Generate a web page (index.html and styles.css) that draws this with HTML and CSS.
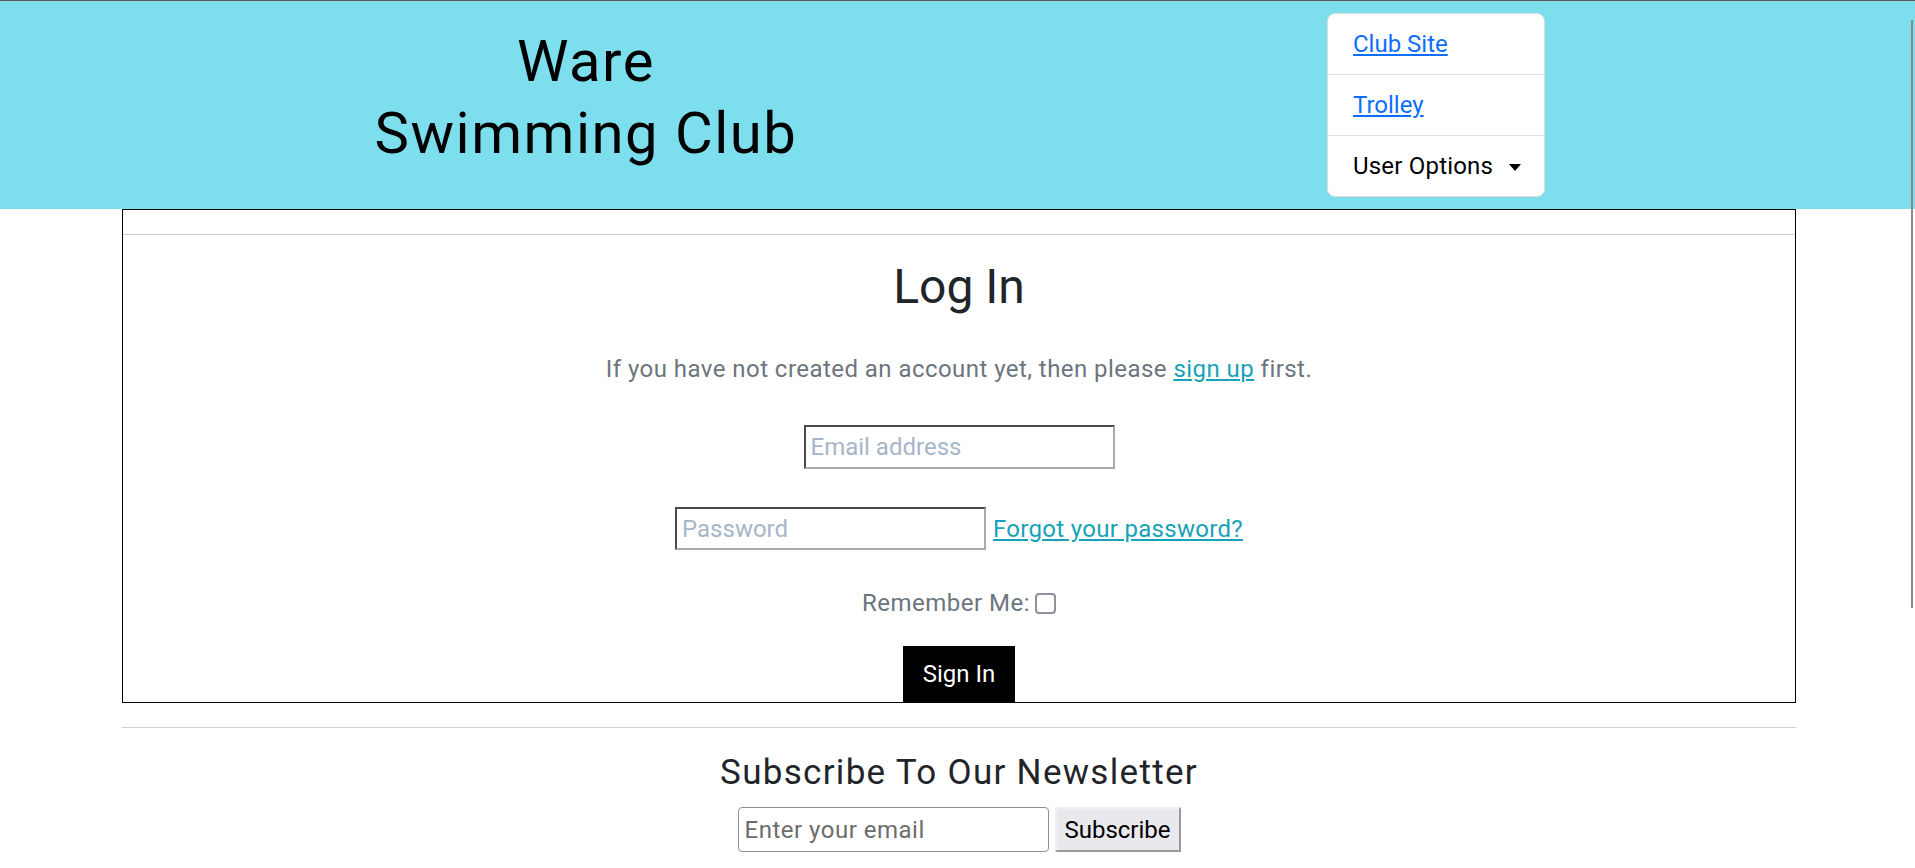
FILE: index.html
```html
<!DOCTYPE html>
<html lang="en">
<head>
<meta charset="utf-8">
<title>Ware Swimming Club - Log In</title>
<link rel="stylesheet" href="styles.css">
</head>
<body>
<header class="site-header">
  <div class="brand">
    <div class="brand-line">Ware</div>
    <div class="brand-line">Swimming Club</div>
  </div>
  <nav class="nav-card">
    <div class="nav-item"><a href="#" class="nav-link">Club Site</a></div>
    <div class="nav-item"><a href="#" class="nav-link">Trolley</a></div>
    <div class="nav-item"><span class="nav-toggle">User Options</span><span class="caret"></span></div>
  </nav>
</header>

<main class="login-card">
  <div class="card-top"></div>
  <div class="card-body">
    <h1 class="login-title">Log In</h1>
    <p class="login-intro">If you have not created an account yet, then please <a href="#" class="info-link">sign up</a> first.</p>
    <div class="form-row row-email">
      <input class="inset-input" type="email" placeholder="Email address">
    </div>
    <div class="form-row row-password">
      <input class="inset-input" type="password" placeholder="Password">
      <a href="#" class="info-link forgot">Forgot your password?</a>
    </div>
    <div class="form-row row-remember">
      <label class="remember-label">Remember Me:</label>
      <input class="remember-box" type="checkbox">
    </div>
    <div class="form-row row-submit">
      <button class="signin-btn" type="button">Sign In</button>
    </div>
  </div>
</main>

<section class="newsletter">
  <hr class="divider">
  <h2 class="news-title">Subscribe To Our Newsletter</h2>
  <div class="news-row">
    <input class="news-input" type="email" placeholder="Enter your email">
    <button class="news-btn" type="button">Subscribe</button>
  </div>
</section>

<div class="scroll-thumb"></div>
</body>
</html>
```

FILE: styles.css
```css
html, body {
  margin: 0;
  padding: 0;
  background: #ffffff;
  overflow: hidden;
}

body {
  font-family: Roboto, "Liberation Sans", sans-serif;
  color: #212529;
}

/* ---------- header ---------- */
.site-header {
  display: flex;
  align-items: flex-start;
  height: 208px;
  border-top: 1px solid #5d5d5d;
  background: #7ddfee;
}

.brand {
  width: 1172px;
  padding-top: 24px;
  text-align: center;
  font-size: 58px;
  line-height: 72px;
  letter-spacing: 1.5px;
  color: #000000;
}

.nav-card {
  margin-top: 12px;
  margin-left: 155px;
  width: 216px;
  background: #ffffff;
  border: 1px solid #dcdcdc;
  border-radius: 8px;
}

.nav-item {
  display: flex;
  align-items: center;
  height: 60px;
  padding: 0 20px 0 25px;
  font-size: 24px;
  line-height: 28px;
  white-space: nowrap;
}

.nav-item + .nav-item {
  border-top: 1px solid #dedede;
}

.nav-link {
  color: #0d6efd;
  text-decoration: underline;
}

.nav-toggle {
  color: #000000;
  letter-spacing: 0.2px;
}

.caret {
  flex: none;
  display: inline-block;
  margin-left: 16px;
  margin-top: 2px;
  border-top: 7px solid #000000;
  border-left: 6px solid transparent;
  border-right: 6px solid transparent;
}

/* ---------- login card ---------- */
.login-card {
  display: block;
  margin: 0 119px 0 122px;
  border: 1px solid #000000;
}

.card-top {
  height: 24px;
  border-bottom: 1px solid #cccccc;
}

.card-body {
  padding-top: 23px;
  text-align: center;
}

.login-title {
  margin: 0;
  font-size: 48px;
  line-height: 58px;
  font-weight: 400;
  color: #212529;
}

.login-intro {
  margin: 37px 0 0;
  font-size: 24px;
  line-height: 33px;
  letter-spacing: 0.45px;
  color: #6c757d;
}

.info-link {
  color: #17a2b8;
  text-decoration: underline;
}

.form-row {
  display: flex;
  justify-content: center;
  align-items: center;
}

.row-email {
  margin-top: 39px;
}

.row-password {
  margin-top: 38px;
  gap: 7px;
}

.inset-input {
  box-sizing: border-box;
  width: 311px;
  height: 44px;
  margin: 0;
  padding: 0 5px;
  border: 2px solid;
  border-color: #4a4a4a #aaaaaa #aaaaaa #4a4a4a;
  background: #ffffff;
  font-family: Roboto, "Liberation Sans", sans-serif;
  font-size: 24px;
  color: #212529;
  outline: none;
}

.row-password .inset-input {
  height: 43px;
}

.inset-input::placeholder {
  color: #a6b6c8;
}

.forgot {
  font-size: 24px;
  line-height: 30px;
  letter-spacing: 0.3px;
}

.row-remember {
  margin-top: 38px;
  height: 30px;
  gap: 5px;
}

.remember-label {
  font-size: 24px;
  line-height: 30px;
  letter-spacing: 0.5px;
  color: #6c757d;
}

.remember-box {
  appearance: none;
  -webkit-appearance: none;
  box-sizing: border-box;
  width: 21px;
  height: 21px;
  margin: 0;
  border: 2px solid #8f8f9d;
  border-radius: 4px;
  background: #ffffff;
}

.row-submit {
  margin-top: 28px;
}

.signin-btn {
  box-sizing: border-box;
  width: 112px;
  height: 56px;
  margin: 0;
  padding: 0;
  border: none;
  background: #000000;
  color: #ffffff;
  font-family: Roboto, "Liberation Sans", sans-serif;
  font-size: 24px;
}

/* ---------- newsletter ---------- */
.newsletter {
  margin: 0 119px 0 122px;
  text-align: center;
}

.divider {
  margin: 24px 0 0;
  border: none;
  border-top: 1px solid #d0d0d0;
  height: 0;
}

.news-title {
  margin: 26px 0 0;
  font-size: 35px;
  line-height: 38px;
  letter-spacing: 1.3px;
  font-weight: 400;
  color: #212529;
}

.news-row {
  display: flex;
  justify-content: center;
  gap: 6px;
  margin-top: 15px;
}

.news-input {
  box-sizing: border-box;
  width: 311px;
  height: 45px;
  margin: 0;
  padding: 0 6px;
  border: 1px solid #8f8f9d;
  border-radius: 4px;
  background: #ffffff;
  font-family: Roboto, "Liberation Sans", sans-serif;
  font-size: 24px;
  letter-spacing: 0.5px;
  outline: none;
}

.news-input::placeholder {
  color: #6d6d6d;
}

.news-btn {
  box-sizing: border-box;
  width: 126px;
  height: 45px;
  margin: 0;
  padding: 0;
  border: 2px solid;
  border-color: #f0f0f4 #9a9a9a #9a9a9a #f0f0f4;
  background: #e9e9ed;
  color: #000000;
  font-family: Roboto, "Liberation Sans", sans-serif;
  font-size: 24px;
}

/* overlay scrollbar thumb */
.scroll-thumb {
  position: fixed;
  top: 20px;
  right: 2px;
  width: 2px;
  height: 588px;
  background: #8a8a8a;
}
```
